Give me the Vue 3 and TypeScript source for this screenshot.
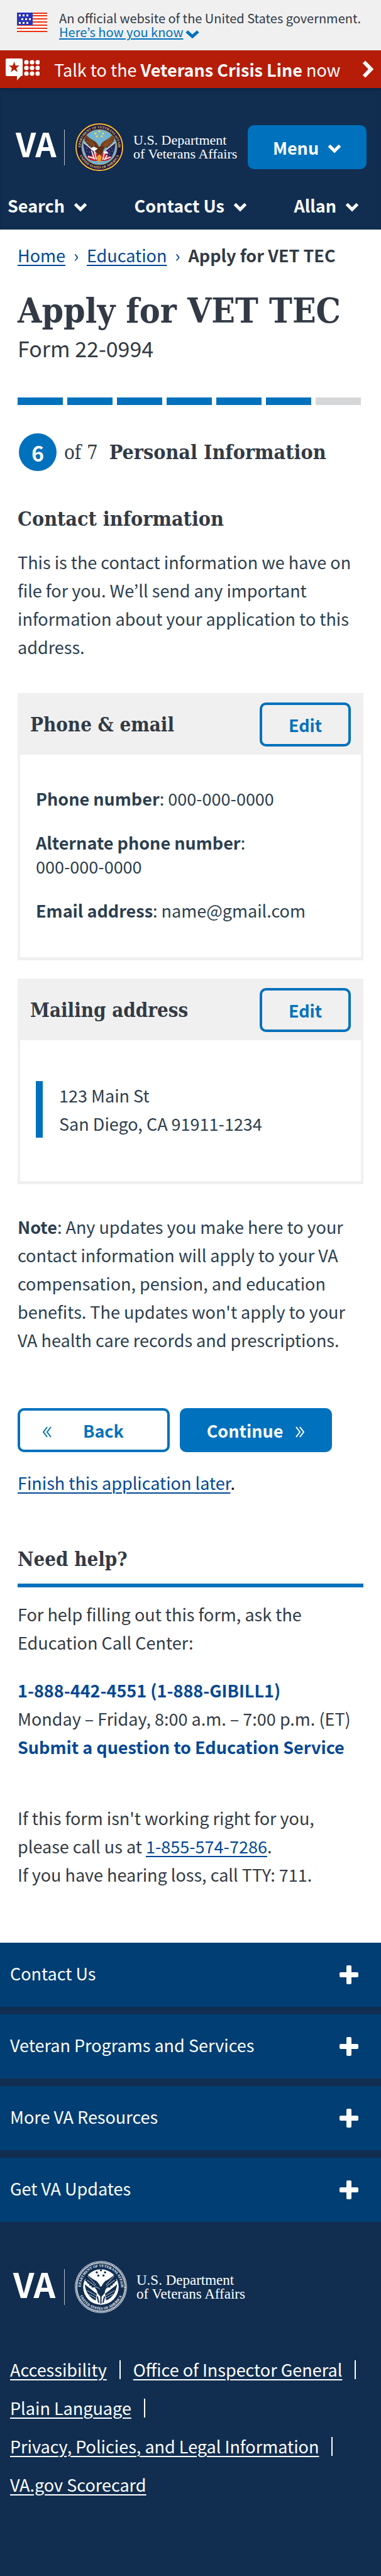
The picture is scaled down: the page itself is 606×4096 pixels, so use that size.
<script setup lang="ts">
interface NavItem { label: string }
interface FooterLink { label: string; divided: boolean }

const navItems: NavItem[] = [{ label: 'Search' }, { label: 'Contact Us' }, { label: 'Allan' }]
const totalSteps = 7
const currentStep = 6
const footerSections: string[] = [
  'Contact Us',
  'Veteran Programs and Services',
  'More VA Resources',
  'Get VA Updates',
]
const footerLinks: FooterLink[] = [
  { label: 'Accessibility', divided: true },
  { label: 'Office of Inspector General', divided: true },
  { label: 'Plain Language', divided: true },
  { label: 'Privacy, Policies, and Legal Information', divided: true },
  { label: 'VA.gov Scorecard', divided: false },
]
const ringDots: number[][] = [0, 1, 2].flatMap((r) => [0, 1, 2].map((c) => [33 + c * 9, 6 + r * 9]))
const flagStars: number[][] = [
  [3, 3], [9, 3], [15, 3], [7, 9], [13, 9], [19, 9], [3, 15], [9, 15], [15, 15],
]
const sealStars: number[][] = [[42, 22], [50, 18], [58, 22], [45, 28], [55, 28]]
const wing = 'M50 54 C48 43 42 38 37 36 C32 33 27 29 22 24 L23 29 L19 27 L21 32 L18 31 L21 36 L19 37 L24 41 L23 42 L28 45 L27 47 L32 48 L32 51 L38 51 L42 56 Z'
</script>

<template>
  <div class="page">
    <section class="gov">
      <svg class="flag" viewBox="0 0 48 31" aria-hidden="true">
        <rect width="48" height="31" fill="#fff" />
        <rect v-for="n in 7" :key="n" x="0" :y="(n - 1) * 5 - (n > 1 ? 1 : 0)" width="48" height="2" fill="#f03010" />
        <rect width="25" height="20" fill="#2b35b8" />
        <rect v-for="(s, i) in flagStars" :key="'s' + i" :x="s[0]" :y="s[1]" width="3" height="3" fill="#fff" />
      </svg>
      <div class="gov-text">
        <div>An official website of the United States government.</div>
        <button type="button" class="gov-more"><span>Here’s how you know</span><svg viewBox="0 0 22 14" aria-hidden="true"><path d="M2 3l9 8 9-8" fill="none" stroke="currentColor" stroke-width="5" /></svg></button>
      </div>
    </section>

    <a class="crisis" href="#crisis">
      <svg class="crisis-icon" viewBox="0 0 54 35" aria-hidden="true">
        <path d="M2 0h23q2 0 2 2v24q0 2-2 2h-1l-6 7v-7H2q-2 0-2-2V2q0-2 2-2z" fill="#fff" />
        <path d="M13.500 5l2.200 6.200h6.300l-5 4 1.900 6.500-5.400-3.900-5.400 3.900 1.900-6.500-5-4h6.300z" fill="#b51d09" />
        <circle v-for="(d, i) in ringDots" :key="i" :cx="d[0]" :cy="d[1]" r="3.600" fill="#fff" />
      </svg>
      <span class="crisis-text">Talk to the <b>Veterans Crisis Line</b> now</span>
      <svg class="crisis-arrow" viewBox="0 0 18 28" aria-hidden="true"><path d="M3 2.500L14 14 3 25.500" fill="none" stroke="#fff" stroke-width="6" /></svg>
    </a>

    <header class="header">
      <div class="brand-row">
        <a href="#home" class="logo" aria-label="VA home">
          <span class="va">VA</span>
          <span class="rule"></span>
          <svg class="seal" viewBox="0 0 100 100" aria-hidden="true">
            <defs>
              <path id="arc-top" d="M11.500 50a38.500 38.500 0 0 1 77 0" />
              <path id="arc-bottom" d="M6.500 50a43.500 43.500 0 0 0 87 0" />
            </defs>
            <circle cx="50" cy="50" r="50" fill="#1d1740" />
            <circle cx="50" cy="50" r="47.500" fill="none" stroke="#f0bf3a" stroke-width="2.500" />
            <circle cx="50" cy="50" r="36" fill="#6fb4d3" stroke="#c9a33b" stroke-width="1" />
            <text class="ring gold"><textPath href="#arc-top" startOffset="50%" text-anchor="middle">DEPARTMENT OF VETERANS AFFAIRS</textPath></text>
            <text class="ring gold"><textPath href="#arc-bottom" startOffset="50%" text-anchor="middle">UNITED STATES OF AMERICA</textPath></text>
            <circle v-for="(s, i) in sealStars" :key="i" :cx="s[0]" :cy="s[1]" r="2.200" fill="#f5d24a" />
            <path d="M17 40L42 60 40 72 28 74Q18 62 17 40zM83 40L58 60 60 72 72 74Q82 62 83 40z" fill="#272459" />
            <path d="M22 67Q34 74 41 55L50 62 60 58Q68 74 78 67Q70 80 56 78L44 78Q30 80 22 67z" fill="#c9232e" />
            <path d="M34 57l6 18M39 55l5 20M27 69l14 4M60 62l-3 14M66 66l-6 10M73 70l-13 5" stroke="#fff" stroke-width="2.200" fill="none" />
            <path d="M17 40L46 64M83 40L54 64" stroke="#e8e4dc" stroke-width="1.500" />
            <path :d="wing" fill="#6b3517" />
            <path :d="wing" transform="translate(100 0) scale(-1 1)" fill="#78401d" />
            <path d="M25 29l15 17M24 37l16 12M75 29L60 46M76 37L60 49" stroke="#a5683a" stroke-width="1.200" />
            <path d="M40 50L60 48 57 62 50 68 44 62z" fill="#5f2e14" />
            <path d="M33 52l6-3 8 4-6 4-8-2zM60 63l9 0-4-5-7 1z" fill="#fff" />
            <path d="M45 70l5-6 5 6-3 12-2-5-3 6z" fill="#e8a52b" />
            <path d="M24 52h1M29 60h1M24 59h1M28 67h1M75 52h1M70 57h1M76 58h1M71 64h1" stroke="#fff" stroke-width="1.500" />
          </svg>
          <span class="dept">U.S. Department<br>of Veterans Affairs</span>
        </a>
        <button type="button" class="menu"><span>Menu</span><svg class="chev" viewBox="0 0 22 16" aria-hidden="true"><path d="M2.500 3.500L11 12l8.500-8.500" fill="none" stroke="currentColor" stroke-width="5" /></svg></button>
      </div>
      <nav class="nav" aria-label="Main">
        <button v-for="item in navItems" :key="item.label" type="button"><span>{{ item.label }}</span><svg class="chev" viewBox="0 0 22 16" aria-hidden="true"><path d="M2.500 3.500L11 12l8.500-8.500" fill="none" stroke="currentColor" stroke-width="5" /></svg></button>
      </nav>
    </header>

    <main class="main">
      <nav class="crumbs" aria-label="Breadcrumb">
        <a href="#home">Home</a><i>›</i><a href="#education">Education</a><i>›</i><b>Apply for VET TEC</b>
      </nav>
      <h1>Apply for VET TEC</h1>
      <p class="form-no">Form 22-0994</p>

      <div class="steps" role="progressbar" aria-valuemin="0" :aria-valuemax="totalSteps" :aria-valuenow="currentStep" aria-label="Form progress">
        <span v-for="n in totalSteps" :key="n" :class="{ done: n <= currentStep }"></span>
      </div>
      <div class="step-title">
        <span class="circle">{{ currentStep }}</span>
        <span class="of">of {{ totalSteps }}</span>
        <h2>Personal Information</h2>
      </div>

      <h2 class="section-title">Contact information</h2>
      <p class="body">This is the contact information we have on file for you. We’ll send any important information about your application to this address.</p>

      <section class="card">
        <div class="card-head"><h3>Phone &amp; email</h3><button type="button" class="outline edit">Edit</button></div>
        <div class="card-body fields">
          <p><b>Phone number</b>: 000-000-0000</p>
          <p><b>Alternate phone number</b>:<br>000-000-0000</p>
          <p><b>Email address</b>: name@gmail.com</p>
        </div>
      </section>
      <section class="card">
        <div class="card-head"><h3>Mailing address</h3><button type="button" class="outline edit">Edit</button></div>
        <div class="card-body mailing">
          <address>123 Main St<br>San Diego, CA 91911-1234</address>
        </div>
      </section>

      <p class="body note"><b>Note</b>: Any updates you make here to your contact information will apply to your VA compensation, pension, and education benefits. The updates won't apply to your VA health care records and prescriptions.</p>

      <div class="actions">
        <button type="button" class="outline back"><svg viewBox="0 0 15 18" aria-hidden="true"><path d="M8 1L2 9l6 8M14 1L8 9l6 8" fill="none" stroke="currentColor" stroke-width="2" /></svg><span>Back</span></button>
        <button type="button" class="solid"><span>Continue</span><svg viewBox="0 0 15 18" aria-hidden="true"><path d="M1 1l6 8-6 8M7 1l6 8-6 8" fill="none" stroke="currentColor" stroke-width="2" /></svg></button>
      </div>
      <p class="later"><a href="#later">Finish this application later</a>.</p>

      <section class="help">
        <h2>Need help?</h2>
        <p>For help filling out this form, ask the Education Call Center:</p>
        <p class="call"><a href="#call">1-888-442-4551 (1-888-GIBILL1)</a><br>Monday – Friday, 8:00 a.m. – 7:00 p.m. (ET)<br><a href="#question">Submit a question to Education Service</a></p>
        <p class="trouble">If this form isn't working right for you, please call us at <a href="#support">1-855-574-7286</a>.<br>If you have hearing loss, call TTY: 711.</p>
      </section>
    </main>

    <footer class="footer">
      <div class="accordion">
        <button v-for="s in footerSections" :key="s" type="button"><span>{{ s }}</span><svg viewBox="0 0 30 30" aria-hidden="true"><rect x="11" y="0" width="8" height="30" rx="2" fill="#fff" /><rect x="0" y="11" width="30" height="8" rx="2" fill="#fff" /></svg></button>
      </div>
      <a href="#home" class="logo foot" aria-label="VA home">
        <span class="va">VA</span>
        <span class="rule"></span>
        <svg class="seal" viewBox="0 0 100 100" aria-hidden="true">
          <circle cx="50" cy="50" r="49.300" fill="none" stroke="#fff" stroke-width="1" />
          <circle cx="50" cy="50" r="46.500" fill="none" stroke="#fff" stroke-width="3.200" stroke-dasharray="1.800 1" />
          <circle cx="50" cy="50" r="34" fill="#fff" />
          <text class="ring white"><textPath href="#arc-top" startOffset="50%" text-anchor="middle">DEPARTMENT OF VETERANS AFFAIRS</textPath></text>
          <text class="ring white"><textPath href="#arc-bottom" startOffset="50%" text-anchor="middle">UNITED STATES OF AMERICA</textPath></text>
          <circle v-for="(s, i) in sealStars" :key="i" :cx="s[0]" :cy="s[1]" r="2" fill="#112e51" />
          <path d="M19 45L42 63 40 76Q22 68 19 45zM81 45L58 63 60 76Q78 68 81 45z" fill="#112e51" />
          <path :d="wing" fill="#112e51" />
          <path :d="wing" transform="translate(100 0) scale(-1 1)" fill="#112e51" />
          <path d="M40 50L60 48 57 62 50 70 44 62z" fill="#112e51" />
          <path d="M25 29l15 17M24 37l16 12M75 29L60 46M76 37L60 49M24 57l16 9M27 64l13 7M76 57l-16 9M73 64l-13 7M36 52l6-2 6 4" stroke="#fff" stroke-width="1.200" stroke-dasharray="3 1" fill="none" />
          <path d="M43 68l3 12M50 68v14M57 68l-3 12" stroke="#112e51" stroke-width="2.500" />
        </svg>
        <span class="dept">U.S. Department<br>of Veterans Affairs</span>
      </a>
      <ul class="links">
        <li v-for="l in footerLinks" :key="l.label" :class="{ divided: l.divided }"><a href="#footer">{{ l.label }}</a></li>
      </ul>
    </footer>
  </div>
</template>

<style>
body { margin: 0; background: #fff; }
</style>

<style scoped>
.page {
  font-family: "Noto Sans CJK KR", "Noto Sans", sans-serif;
  font-size: 27px;
  line-height: 45px;
  color: #2b3e4f;
}
p, h1, h2, h3, ul { margin: 0; padding: 0; }
h1, h2, h3 { font-family: "DejaVu Serif Condensed", "DejaVu Serif", serif; font-weight: 700; color: #323a45; }
button { font: inherit; border: 0; background: none; padding: 0; cursor: pointer; color: inherit; }
svg { display: block; flex: none; }
a { color: #004795; text-decoration-thickness: 2px; text-underline-offset: 4px; }

.gov { display: flex; gap: 19px; padding: 18px 20px 18px 27px; background: #f0f0f0; font-size: 20px; line-height: 22px; color: #323a45; }
.flag { width: 48px; height: 31px; margin-top: 2px; }
.gov-more { display: flex; align-items: center; gap: 4px; color: #0071bc; }
.gov-more span { text-decoration: underline; text-decoration-thickness: 2px; text-underline-offset: 2px; }
.gov-more svg { width: 22px; height: 14px; margin-top: 6px; }

.crisis { display: flex; align-items: center; min-height: 60px; padding: 0 12px 0 9px; background: #b51d09; color: #fff; text-decoration: none; }
.crisis-icon { width: 54px; height: 35px; }
.crisis-text { flex: 1; padding-left: 23px; white-space: nowrap; }
.crisis-arrow { width: 18px; height: 28px; }

.header { padding: 59px 0 16px; background: #112e51; color: #fff; box-shadow: inset 0 6px 6px -4px #0c2342; font-weight: 700; }
.brand-row { display: flex; align-items: center; justify-content: space-between; height: 70px; padding: 0 23px 0 25px; }
.logo { display: flex; align-items: center; color: #fff; text-decoration: none; }
.va { width: 77px; padding-bottom: 12px; font-size: 52px; line-height: 58px; font-weight: 700; }
.rule { width: 1px; height: 57px; background: #b9c2cd; }
.seal { width: 78px; height: 78px; margin: 0 15px 0 16px; overflow: visible; }
.dept { font: 400 22px/22px "Liberation Serif", serif; white-space: nowrap; }
.ring { font: 700 7px "Liberation Serif", serif; }
.gold { fill: #e2c877; }
.white { fill: #fff; }
.menu { display: flex; align-items: center; justify-content: center; gap: 14px; width: 189px; height: 70px; border-radius: 10px; background: #0071bc; font-weight: 700; }
.chev { width: 22px; height: 16px; margin-top: 4px; }
.nav { display: flex; justify-content: space-between; margin-top: 36px; padding: 0 35px 0 12px; line-height: 44px; }
.nav button { display: flex; align-items: center; gap: 14px; font-weight: 700; }

.main { padding: 21px 28px 86px; }
.crumbs { display: flex; line-height: 40px; white-space: nowrap; }
.crumbs i { font-style: normal; color: #004795; width: 34px; text-align: center; }
.crumbs b { color: #323a45; }
h1 { margin-top: 38px; font-size: 55px; line-height: 60px; white-space: nowrap; }
.form-no { margin-top: 8px; font-size: 34px; line-height: 44px; color: #323a45; }
.steps { display: flex; gap: 7px; margin-top: 56px; padding-right: 4px; }
.steps span { flex: 1; height: 12px; background: #d6d7d9; }
.steps .done { background: #0071bc; }
.step-title { display: flex; align-items: center; margin-top: 45px; padding-left: 2px; }
.circle { display: flex; align-items: center; justify-content: center; width: 60px; height: 60px; border-radius: 50%; background: #0071bc; color: #fff; font-size: 34px; font-weight: 700; }
.of { margin: 0 18px 0 12px; font-family: "DejaVu Serif Condensed", "DejaVu Serif", serif; font-size: 31px; color: #323a45; }
h2, h3 { font-size: 31px; line-height: 40px; white-space: nowrap; }
.step-title h2, .section-title { font-size: 32px; }
.section-title { margin-top: 56px; }
.body { margin-top: 26px; }

.card { margin-top: 29px; border: 4px solid #f0f0f0; border-top: 0; border-bottom-width: 5px; }
.body + .card { margin-top: 51px; }
.card-head { display: flex; align-items: center; justify-content: space-between; padding: 15px 16px 13px; background: #f0f0f0; }
.outline { border: 4px solid #0071bc; border-radius: 10px; color: #0071bc; font-weight: 700; height: 70px; }
.edit { width: 145px; }
.fields { display: grid; gap: 32px; padding: 51px 25px 55px; line-height: 38px; }
.mailing { padding: 65px 25px 69px; }
address { font-style: normal; padding-left: 26px; border-left: 11px solid #0071bc; }
.note { margin-top: 45px; }

.actions { display: flex; gap: 16px; margin-top: 86px; }
.actions button { display: flex; align-items: center; flex: 0 1 44%; box-sizing: border-box; height: 70px; font-weight: 700; }
.actions svg { width: 15px; height: 18px; margin-top: 6px; }
.back { gap: 50px; padding-left: 35px; }
.solid { justify-content: center; gap: 20px; border-radius: 10px; background: #0071bc; color: #fff; }
.later { margin-top: 26px; color: #111; }

.help { margin-top: 79px; color: #323a45; }
.help h2 { padding-bottom: 19px; margin-bottom: 20px; border-bottom: 6px solid #0071bc; }
.call { margin-top: 31px; }
.call a { font-weight: 700; text-decoration: none; }
.trouble { margin-top: 68px; }

.footer { background: #112e51; color: #fff; padding-bottom: 115px; }
.accordion { display: grid; gap: 12px; }
.accordion button { display: flex; align-items: center; justify-content: space-between; min-height: 102px; padding: 0 36px 0 16px; background: #003e73; text-align: left; }
.accordion span { padding-bottom: 5px; }
.accordion svg { width: 30px; height: 30px; }
.foot { margin: 62px 0 59px 21px; }
.foot .va { width: 81px; font-size: 54px; }
.foot .seal { width: 83px; height: 83px; }
.foot .dept { font-size: 23px; }
.links { display: flex; flex-wrap: wrap; padding-left: 16px; list-style: none; line-height: 61px; }
.links li { display: flex; align-items: center; }
.links a { color: #fff; }
.divided::after { content: ""; width: 2px; height: 30px; margin: 0 20px; background: #fff; }
</style>
